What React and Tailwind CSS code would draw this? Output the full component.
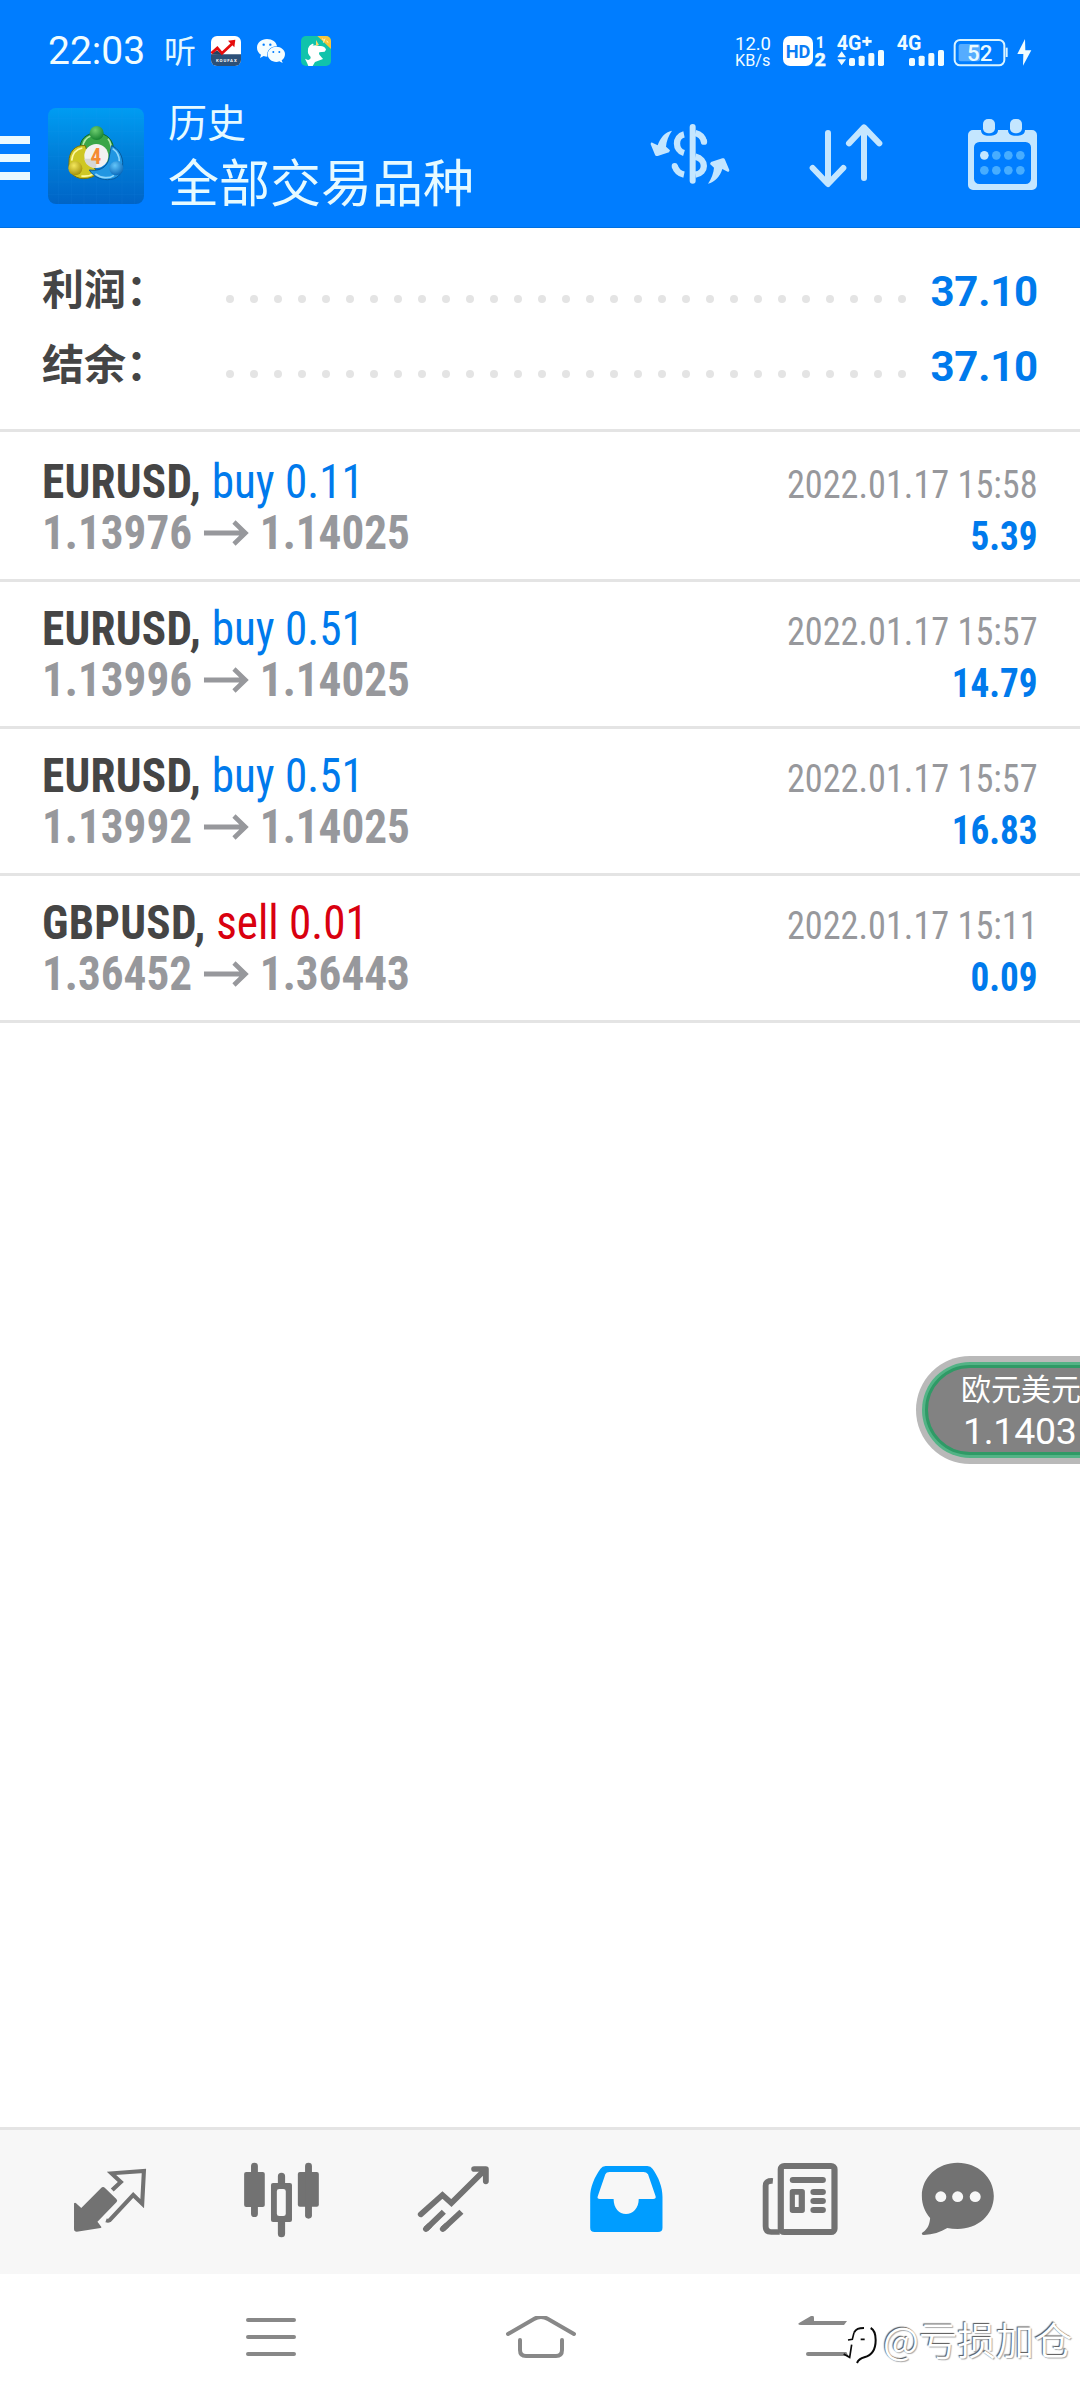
import React from "react";

const summary = [
  { label: "利润：", value: "37.10" },
  { label: "结余：", value: "37.10" },
];

const deals = [
  { id: 1, symbol: "EURUSD", side: "buy", lots: "0.11", open: "1.13976", close: "1.14025", time: "2022.01.17 15:58", profit: "5.39" },
  { id: 2, symbol: "EURUSD", side: "buy", lots: "0.51", open: "1.13996", close: "1.14025", time: "2022.01.17 15:57", profit: "14.79" },
  { id: 3, symbol: "EURUSD", side: "buy", lots: "0.51", open: "1.13992", close: "1.14025", time: "2022.01.17 15:57", profit: "16.83" },
  { id: 4, symbol: "GBPUSD", side: "sell", lots: "0.01", open: "1.36452", close: "1.36443", time: "2022.01.17 15:11", profit: "0.09" },
];

/* ---------- Status bar ---------- */

function StockAppIcon() {
  return (
    <svg className="w-8 h-8" viewBox="630 105 96 96">
      <rect x="633" y="108" width="90" height="90" rx="18" fill="#fff" />
      <path d="M633 163h90v17a18 18 0 0 1-18 18h-54a18 18 0 0 1-18-18z" fill="#2c5078" />
      <path d="M633 163l18-12 18 14z" fill="#27415f" />
      <path d="M634 160l18-16 14 16 32-30" fill="none" stroke="#e60c0c" strokeWidth="8" />
      <path d="M684 122l22-3-3 23z" fill="#e60c0c" />
      <text x="648" y="187" fontSize="13" fontWeight="700" fill="#fff" fontFamily="Roboto" textLength="62">KOUFAX</text>
    </svg>
  );
}

function WechatIcon() {
  return (
    <svg className="w-8 h-8 ml-3.5" viewBox="768 105 96 96" fill="#f4fdff">
      <path d="M801 117c-17 0-30 11-30 26 0 9 5 16 12 21l-3 10 11-6c4 1 7 2 11 2-3-18 9-31 29-31-2-13-14-22-30-22z" />
      <path d="M855 162c0-12-12-22-26-22s-26 10-26 23 12 23 26 23c3 0 6-1 9-2l10 5-3-8c6-4 10-11 10-19z" />
      <g fill="#007dff">
        <circle cx="791" cy="134" r="3.5" />
        <circle cx="811" cy="134" r="3.5" />
        <circle cx="820" cy="156" r="3" />
        <circle cx="838" cy="156" r="3" />
      </g>
    </svg>
  );
}

function UnicornIcon() {
  return (
    <svg className="w-8 h-8 ml-3" viewBox="900 105 96 96">
      <rect x="903" y="108" width="90" height="90" rx="15" fill="#10c3ab" />
      <path d="M952 108h26a15 15 0 0 1 15 15v24z" fill="#f7c53a" />
      <path d="M966 116l6 5m3-5l-5 12m10-6l4 6" stroke="#fff3c0" strokeWidth="3" />
      <path d="M948 136l8 2c12-1 21 4 22 11l-4 6-16 2c-4 8 6 12 11 20l-24 9-7 12h-13l-4-10-6-12 9 4c9-3 10-8 5-13-8-9-7-24 4-30z" fill="#fff" />
      <path d="M948 120l9 15-9 2z" fill="#f7d56a" />
      <path d="M940 133c-15 6-17 20-9 32" fill="none" stroke="#fff" strokeWidth="5" />
    </svg>
  );
}

function NetSpeed() {
  return (
    <svg className="w-[38px] h-8 overflow-visible" viewBox="42 105 114 96" fill="#f0fcff" fontFamily="Roboto" fontWeight="450">
      <text x="45" y="150" fontSize="57" textLength="108" lengthAdjust="spacingAndGlyphs">12.0</text>
      <text x="45" y="197" fontSize="48" textLength="106" lengthAdjust="spacingAndGlyphs">KB/s</text>
    </svg>
  );
}

function HdBadge() {
  return (
    <svg className="w-[45px] h-8 ml-2.5 overflow-visible" viewBox="186 105 135 96" fontFamily="Roboto" fontWeight="700">
      <rect x="189" y="108" width="90" height="90" rx="21" fill="#fff" />
      <text x="197" y="173" fontSize="56" fill="#0a7cf5" textLength="74" lengthAdjust="spacingAndGlyphs">HD</text>
      <text x="287" y="143" fontSize="47" fill="#f0fcff">1</text>
      <text x="284" y="197" fontSize="54" fill="#f0fcff" stroke="#f0fcff" strokeWidth="2" textLength="33" lengthAdjust="spacingAndGlyphs">2</text>
    </svg>
  );
}

function SignalBars({ x }) {
  return (
    <g fill="#f0fcff">
      <rect x={x} y="174" width="18" height="24" rx="5" />
      <rect x={x + 29} y="167" width="18" height="31" rx="5" />
      <rect x={x + 58} y="159" width="18" height="39" rx="5" />
      <rect x={x + 87} y="150" width="18" height="48" rx="5" />
    </g>
  );
}

function Signals() {
  return (
    <>
      <svg className="w-[49px] h-8 ml-[9px] overflow-visible" viewBox="348 105 147 96" fontFamily="Roboto" fontWeight="700">
        <text x="350" y="151" fontSize="58" fill="#f0fcff" textLength="74" lengthAdjust="spacingAndGlyphs">4G</text>
        <path d="M427 124h28M441 110v28" stroke="#f0fcff" strokeWidth="8" />
        <path d="M352 172l13-18 13 18zM352 178l13 18 13-18z" fill="#f0fcff" />
        <SignalBars x={387} />
      </svg>
      <svg className="w-[49px] h-8 ml-[11px] overflow-visible" viewBox="528 105 147 96" fontFamily="Roboto" fontWeight="700">
        <text x="530" y="151" fontSize="58" fill="#f0fcff" textLength="74" lengthAdjust="spacingAndGlyphs">4G</text>
        <SignalBars x={567} />
      </svg>
    </>
  );
}

function Battery() {
  return (
    <>
      <svg className="w-14 h-8 ml-2" viewBox="699 105 168 96">
        <rect x="704" y="120" width="149" height="76" rx="16" fill="none" stroke="#d9f3ff" strokeWidth="6" />
        <rect x="716" y="132" width="64" height="52" rx="6" fill="#55acff" />
        <path d="M860 143v28" stroke="#d9f3ff" strokeWidth="6" />
        <text x="741" y="183" fontSize="67" fontWeight="500" fontFamily="Roboto" fill="#eafaff">52</text>
      </svg>
      <svg className="w-[17px] h-8 ml-[7px]" viewBox="888 105 51 96">
        <path d="M915 117l-23 45h18l-1 35 25-46h-18z" fill="#f0fcff" />
      </svg>
    </>
  );
}

function StatusBar() {
  return (
    <div className="flex items-center h-[65px] mt-[18px] pl-[48px] pr-[47px]">
      <span className="w-[116px] font-[Roboto] text-[39px] leading-[40px] text-[#f0fcff]">22:03</span>
      <span className="w-[46px] -mt-1 font-['Noto_Sans_CJK_SC',sans-serif] text-[32px] leading-8 text-[#e2f8ff]">听</span>
      <StockAppIcon />
      <WechatIcon />
      <UnicornIcon />
      <div className="flex items-center ml-auto">
        <NetSpeed />
        <HdBadge />
        <Signals />
        <Battery />
      </div>
    </div>
  );
}

/* ---------- Toolbar ---------- */

function AppLogo() {
  return (
    <svg className="w-24 h-24 ml-[18px] mt-2" viewBox="0 0 288 288">
      <defs>
        <linearGradient id="logoBg" x1="0" y1="0" x2="0" y2="1">
          <stop offset="0" stopColor="#009cf2" />
          <stop offset="0.5" stopColor="#007fd9" />
          <stop offset="1" stopColor="#0064c6" />
        </linearGradient>
        <radialGradient id="logoGreen" cx="0.4" cy="0.3" r="0.8">
          <stop offset="0" stopColor="#6fce70" />
          <stop offset="1" stopColor="#0b7a28" />
        </radialGradient>
        <radialGradient id="logoYellow" cx="0.4" cy="0.3" r="0.8">
          <stop offset="0" stopColor="#f4e85c" />
          <stop offset="1" stopColor="#9a8600" />
        </radialGradient>
        <radialGradient id="logoBlue" cx="0.4" cy="0.3" r="0.8">
          <stop offset="0" stopColor="#63c6fa" />
          <stop offset="1" stopColor="#005eb4" />
        </radialGradient>
      </defs>
      <rect width="288" height="288" rx="24" fill="url(#logoBg)" />
      <path d="M32 0v288M70 0v288M108 0v288M146 0v288M184 0v288M222 0v288M260 0v288M0 32h288M0 70h288M0 108h288M0 146h288M0 184h288M0 222h288M0 260h288" stroke="#35a9f5" strokeOpacity="0.12" strokeWidth="2" />
      <path d="M97 125c-4-30 18-50 49-50s54 24 50 56c-1 14-6 26-14 34l-40-22z" fill="#3aa648" stroke="#10682a" strokeWidth="3" />
      <path d="M104 118c2-18 12-30 24-34M180 92c8 10 11 24 8 40" fill="none" stroke="#b4eaa8" strokeWidth="5" />
      <path d="M112 113c-32-4-50 20-49 50-4 27 14 48 42 49 20 0 36-7 46-17l-24-30z" fill="#cfc724" stroke="#77700a" strokeWidth="3" />
      <path d="M71 158c2-20 12-34 32-38M100 204c16 2 28-1 38-8" fill="none" stroke="#fff9a0" strokeWidth="5" />
      <path d="M190 113c22 8 36 32 34 60 0 26-18 42-46 42-24 0-44-12-54-29 30 4 50-6 58-30z" fill="#2196e2" stroke="#075a9d" strokeWidth="3" />
      <path d="M142 198c18 14 42 14 56 4M194 122c12 8 20 22 20 38" fill="none" stroke="#8fd6fb" strokeWidth="5" />
      <circle cx="146" cy="75" r="21" fill="url(#logoGreen)" />
      <circle cx="82" cy="181" r="21" fill="url(#logoYellow)" />
      <circle cx="205" cy="181" r="21" fill="url(#logoBlue)" />
      <circle cx="145" cy="144" r="36" fill="#f1f1f1" />
      <path d="M109 152h36v28c-20 0-35-13-36-28z" fill="#d6d6d6" />
      <text x="144" y="167" fontSize="64" fontWeight="700" fontFamily="Roboto Condensed" textAnchor="middle" fill="#f58a33">4</text>
    </svg>
  );
}

function CurrencyIcon() {
  return (
    <svg className="w-21 h-21" viewBox="24 6 252 252" fill="#c4e6ff">
      <path d="M158 51v161" stroke="#c4e6ff" strokeWidth="18" strokeLinecap="round" />
      <g fill="none" stroke="#c4e6ff" strokeWidth="19">
        <path d="M132 73C104 79 104 121 132 129" />
        <path d="M104 168c5 15 14 23 28 26" />
        <path d="M166 69c16 4 23 12 26 26" />
        <path d="M166 140c34 8 34 48 0 54" />
      </g>
      <circle cx="104" cy="168" r="9" />
      <circle cx="192" cy="95" r="9.5" />
      <path d="M96 62c-10 14-17 32-18 48l12 11-3 6-34 11c-4 1-6 0-8-4L32 103c0-4 2-6 5-5l16 8c7-22 22-40 43-44z" />
      <path d="M204 221c21-4 36-22 43-44l16 8c3 1 5-1 5-5l-13-31c-2-4-4-5-8-4l-34 11-3 6 12 11c-1 16-8 34-18 48z" />
    </svg>
  );
}

function SortIcon() {
  return (
    <svg className="w-21 h-21 ml-[72px]" viewBox="252 336 252 252" fill="none" stroke="#c4e6ff" strokeWidth="18" strokeLinecap="round" strokeLinejoin="round">
      <path d="M324 399v150M278 504l46 48 46-48" />
      <path d="M432 534V384M387 430l45-48 46 48" />
    </svg>
  );
}

function CalendarIcon() {
  return (
    <svg className="w-21 h-21 ml-[73px]" viewBox="723 336 252 252">
      <path fillRule="evenodd" fill="#c4e6ff" d="M759 390h24c0 11 9 17 18 17h12c12 0 21-6 21-17h30c0 11 9 17 18 17h12c12 0 21-6 21-17h21a15 15 0 0 1 15 15v150a15 15 0 0 1-15 15H759a15 15 0 0 1-15-15V405a15 15 0 0 1 15-15zM778 426a16 16 0 0 0-16 16v94a16 16 0 0 0 16 16h139a16 16 0 0 0 16-16v-94a16 16 0 0 0-16-16z" />
      <rect x="789" y="357" width="36" height="43" rx="15" fill="#c4e6ff" />
      <rect x="870" y="357" width="36" height="43" rx="15" fill="#c4e6ff" />
      <circle cx="793" cy="466" r="13" fill="#c4e6ff" />
      <g fill="#47adff">
        <circle cx="829" cy="466" r="13" />
        <circle cx="865" cy="466" r="13" />
        <circle cx="901" cy="466" r="13" />
        <circle cx="793" cy="511" r="13" />
        <circle cx="829" cy="511" r="13" />
        <circle cx="865" cy="511" r="13" />
        <circle cx="901" cy="511" r="13" />
      </g>
    </svg>
  );
}

function Toolbar() {
  return (
    <div className="flex items-start h-32 mt-[17px]">
      {/* Menu button, cut by the screen edge */}
      <div className="flex flex-col gap-2.5 mt-9">
        <span className="w-[30px] h-2 bg-[#eafaff]" />
        <span className="w-[30px] h-2 bg-[#eafaff]" />
        <span className="w-[30px] h-2 bg-[#eafaff]" />
      </div>
      <AppLogo />
      <div className="ml-6 font-['Noto_Sans_CJK_SC',sans-serif] text-[#e6faff]">
        <div className="text-[39px] leading-10 font-[370]">历史</div>
        <div className="mt-[15px] text-[51px] leading-[51px] font-[370]">全部交易品种</div>
      </div>
      <div className="flex ml-auto mt-3 pr-[35px]">
        <CurrencyIcon />
        <SortIcon />
        <CalendarIcon />
      </div>
    </div>
  );
}

/* ---------- History ---------- */

function SummaryRow({ label, value }) {
  return (
    <div className="flex items-center h-[75px]">
      <span className="w-[184px] -mt-2 font-['Noto_Sans_CJK_SC',sans-serif] text-[42px] leading-[42px] font-semibold text-[#454545]">
        {label}
      </span>
      <div className="flex justify-between w-[680px] mt-4">
        {[...Array(29)].map((_, i) => (
          <span key={i} className="w-2 h-2 rounded-full bg-[#e4e4e4]" />
        ))}
      </div>
      <span className="ml-auto mt-0.5 font-[Roboto] text-[42px] leading-[42px] font-bold tracking-[-0.2px] text-[#007aec]">{value}</span>
    </div>
  );
}

function DealRow({ deal, first }) {
  return (
    <div
      className={`flex justify-between pl-[42px] pr-[42px] border-b-3 border-[#e4e4e4] font-['Roboto_Condensed'] ${
        first ? "h-[150px] pt-6" : "h-[147px] pt-[21px]"
      }`}
    >
      <div className="text-[48px] leading-[51px] origin-left scale-x-[0.941]">
        <div>
          <span className="font-bold tracking-[0.3px] text-[#454545]">{deal.symbol}, </span>
          <span className={deal.side === "buy" ? "text-[#007aec]" : "text-[#d9000f]"}>
            {deal.side} {deal.lots}
          </span>
        </div>
        <div className="flex items-center font-bold text-[#97989c]">
          {deal.open}
          <svg className="w-[49px] h-7 ml-3 mr-[11px]" viewBox="0 0 49 28" fill="none" stroke="#97989c" strokeWidth="5">
            <path d="M0 14h44M32 3l12 11-12 11" />
          </svg>
          {deal.close}
        </div>
      </div>
      <div className="text-right text-[39px] leading-[51px] pt-1 origin-right scale-x-[0.93]">
        <div className="text-[#97989c]">{deal.time}</div>
        <div className="font-bold text-[40px] text-[#007aec]">{deal.profit}</div>
      </div>
    </div>
  );
}

/* ---------- Floating quote ---------- */

function QuotePill() {
  return (
    <div className="absolute top-[1356px] left-[916px] w-[164px] h-[108px] overflow-hidden">
      <div className="w-[260px] h-[108px] rounded-full bg-[#b9b9b9] p-1.5">
        <div className="h-full rounded-full bg-[#53b386] p-[3px]">
          <div className="h-full rounded-full bg-[#828282] border-3 border-[#2f9a66] pl-[33px] pt-px text-white whitespace-nowrap">
            <div className="font-['Noto_Sans_CJK_SC',sans-serif] text-[30px] leading-[36px]">欧元美元</div>
            <div className="mt-1.5 pl-[2px] font-[Roboto] text-[37.500px] leading-10 tracking-[-0.3px]">1.1403</div>
          </div>
        </div>
      </div>
    </div>
  );
}

/* ---------- Bottom tabs ---------- */

const tabs = [
  {
    name: "quotes",
    cell: "w-[172px]",
    box: "197.5 150 244 252",
    art: (
      <>
        <path d="M215 280q3-3 6 0l15 14 57-59q6-7 12-1l33 33q5 5 0 10l-55 58 11 15q2 3-2 4l-69 11q-8 0-8-8z" />
        <path d="M326 240l25-24-27-26 94-7-5 98-26-26-69 76q-4 2-10 0" fill="none" stroke="#727272" strokeWidth="12" />
      </>
    ),
  },
  {
    name: "chart",
    cell: "w-[172px]",
    box: "697 150 244 252",
    art: (
      <>
        <rect x="709" y="186" width="60" height="105" rx="6" />
        <rect x="729" y="158" width="20" height="163" rx="10" />
        <rect x="865" y="186" width="61" height="104" rx="6" />
        <rect x="886" y="158" width="20" height="168" rx="10" />
        <path fillRule="evenodd" d="M793 219h49a6 6 0 0 1 6 6v105a6 6 0 0 1-6 6h-49a6 6 0 0 1-6-6V225a6 6 0 0 1 6-6zM811 237a7 7 0 0 0-7 7v67a7 7 0 0 0 7 7h12a7 7 0 0 0 7-7v-67a7 7 0 0 0-7-7z" />
        <path d="M807 221v-22a10 10 0 0 1 21 0v22zM807 334v37a10 10 0 0 0 21 0v-37z" />
      </>
    ),
  },
  {
    name: "trade",
    cell: "w-[172px]",
    box: "1196.5 150 244 252",
    art: (
      <g fill="none" stroke="#727272" strokeWidth="17">
        <path d="M1222 313l63-58 26 24 96-98" strokeLinecap="round" />
        <path d="M1377 177h34v37" strokeLinecap="round" strokeLinejoin="round" />
        <path d="M1237 357l52-52M1286 357l54-52" />
        <path d="M1237 357l10-10M1286 357l10-10" strokeLinecap="round" />
      </g>
    ),
  },
  {
    name: "history",
    cell: "w-[172px]",
    box: "128 150 244 252",
    art: (
      <path fill="#009dff" fillRule="evenodd" d="M191 168h121q10 0 15 8c18 26 29 55 29 84v93q0 13-13 13H159q-13 0-13-13v-93c0-29 12-58 30-84q5-8 15-8zM202 186q-9 0-12 7l-22 66q-3 8 6 8h40c0 27 16 45 36 45s37-18 37-45h42q9 0 7-8l-22-66q-5-7-13-7z" />
    ),
  },
  {
    name: "news",
    cell: "w-[172px]",
    box: "627 150 244 252",
    art: (
      <>
        <path d="M676 213q-21-2-21 14v122q0 17 16 17h25" fill="none" stroke="#727272" strokeWidth="17" />
        <rect x="699" y="168" width="156" height="198" rx="10" fill="none" stroke="#727272" strokeWidth="18" />
        <rect x="725" y="201" width="105" height="18" rx="9" />
        <rect x="785" y="237" width="45" height="18" rx="9" />
        <rect x="785" y="264" width="45" height="18" rx="9" />
        <rect x="785" y="291" width="45" height="18" rx="9" />
        <path fillRule="evenodd" d="M733 237h28a8 8 0 0 1 8 8v56a8 8 0 0 1-8 8h-28a8 8 0 0 1-8-8v-56a8 8 0 0 1 8-8zM740 254v37h11v-37z" />
      </>
    ),
  },
  {
    name: "messages",
    cell: "w-[148px]",
    box: "1092 150 244 252",
    art: (
      <>
        <path d="M1213 158c58 0 105 43 105 100s-47 99-105 99c-11 0-21-1-30-3-20 13-42 20-68 21-7 0-8-5-3-8 15-11 20-26 21-43-15-18-24-40-24-66 0-57 46-100 104-100z" />
        <g fill="#f7f7f7">
          <circle cx="1164" cy="260" r="16" />
          <circle cx="1213" cy="260" r="16" />
          <circle cx="1264" cy="260" r="16" />
        </g>
      </>
    ),
  },
];

function TabBar() {
  return (
    <div className="flex items-center h-[147px] pl-6 bg-[#f7f7f7] border-t-3 border-[#e4e4e4]">
      {tabs.map((tab) => (
        <button key={tab.name} className={`${tab.cell} flex justify-center`}>
          <svg className="w-21 h-21" viewBox={tab.box} preserveAspectRatio="none" fill="#727272">
            {tab.art}
          </svg>
        </button>
      ))}
    </div>
  );
}

function SystemNav() {
  return (
    <div className="relative flex items-start h-[126px] pl-[244px] pt-[42px] bg-white">
      <svg className="w-[54px] h-11" viewBox="0 0 54 44" stroke="#888" strokeWidth="4" strokeLinecap="round">
        <path d="M4 4h46M4 21h46M4 38h46" />
      </svg>
      <svg className="w-[74px] h-12 ml-[206px]" viewBox="0 0 74 48" fill="none" stroke="#888" strokeWidth="4" strokeLinecap="round">
        <path d="M4 18L30 3q7-4 14 0l26 15" />
        <path d="M16 24v10q0 6 6 6h30q6 0 6-6V24" />
      </svg>
      <svg className="w-[54px] h-12 ml-[218px]" viewBox="0 0 54 48" fill="#888">
        <path d="M3 7L15 0q3-1 3 2v3h33l-3 4H5q-4 0-2-2z" />
        <path d="M12 38h39" stroke="#888" strokeWidth="4" strokeLinecap="round" />
      </svg>

      {/* Author watermark */}
      <div className="absolute top-[37px] left-[841px] flex items-center">
        <svg className="w-10 h-12 mt-1.5" viewBox="183 81 120 144" fill="none">
          <path d="M190 150l20 40 20-50 14-26 24 4 10 30-20 44-44 6" fill="#fff" stroke="#fff" strokeWidth="16" />
          <path d="M222 128c6-12 14-14 30-14" stroke="#0a0a0a" strokeWidth="6" />
          <path d="M272 114c11 6 15 18 15 36 0 30-10 46-34 52-12 3-18 8-22 17" stroke="#0a0a0a" strokeWidth="6" />
          <path d="M222 128l-5 20-13 2M215 164l-6 38-18-10M242 148h12" stroke="#0a0a0a" strokeWidth="5" />
        </svg>
        <span className="ml-0.5 font-['Noto_Sans_CJK_SC',sans-serif] text-[38.400px] leading-[48px] font-[350] text-white [text-shadow:-1px_-1px_1px_#555,1px_1px_1px_#aaa]">
          @亏损加仓
        </span>
      </div>
    </div>
  );
}

export default function App() {
  return (
    <div className="relative flex flex-col w-[1080px] h-[2400px] overflow-hidden bg-white">
      <header className="h-[228px] bg-[#007dff] border-b border-[#0070e0]">
        <StatusBar />
        <Toolbar />
      </header>

      <section className="h-[204px] pt-[25px] pl-[42px] pr-[42px] border-b-3 border-[#e4e4e4]">
        {summary.map((row) => (
          <SummaryRow key={row.label} label={row.label} value={row.value} />
        ))}
      </section>

      <main className="flex-1">
        {deals.map((deal, i) => (
          <DealRow key={deal.id} deal={deal} first={i === 0} />
        ))}
      </main>

      <TabBar />
      <SystemNav />
      <QuotePill />
    </div>
  );
}
